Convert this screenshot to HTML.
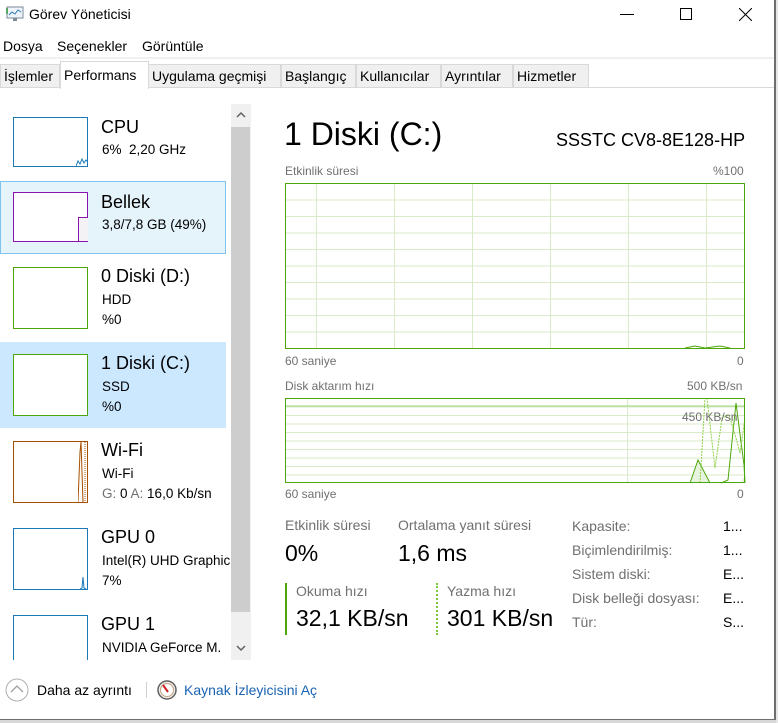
<!DOCTYPE html>
<html><head><meta charset="utf-8"><style>
*{margin:0;padding:0;box-sizing:border-box}
body{width:778px;height:723px;background:#fff;font-family:"Liberation Sans",sans-serif;position:relative;overflow:hidden;color:#000}
.a{position:absolute;white-space:nowrap}
.g{color:#707070}
.tab{position:absolute;top:64px;height:24px;border:1px solid #d9d9d9;background:#f0f0f0;font-size:14px;padding:3px 3px 0 3px;overflow:hidden}
.box{position:absolute;left:13px;width:75px;height:50px;background:#fff}
.t1{font-size:18px}
.t2{font-size:13.5px}
</style></head><body>
<!-- title -->
<svg class="a" style="left:6px;top:6px" width="18" height="16"><rect x="1" y="1" width="16" height="11" fill="#eef4fa" stroke="#7c8a99"/><polyline points="3,9 6,6 9,8 12,4 15,6" fill="none" stroke="#2a7ab8"/><rect x="7" y="12" width="4" height="3" fill="#7c8a99"/><rect x="0" y="2" width="2" height="6" fill="#5a6"/></svg>
<div class="a" style="left:29px;top:6px;font-size:14px">Görev Yöneticisi</div>
<div class="a" style="left:620px;top:14px;width:14px;height:1px;background:#000"></div>
<div class="a" style="left:680px;top:8px;width:12px;height:12px;border:1px solid #000"></div>
<svg class="a" style="left:739px;top:8px" width="13" height="13"><path d="M0 0L13 13M13 0L0 13" stroke="#000" stroke-width="1"/></svg>
<!-- menu -->
<div class="a" style="left:3px;top:38px;font-size:14px">Dosya</div>
<div class="a" style="left:57px;top:38px;font-size:14px">Seçenekler</div>
<div class="a" style="left:142px;top:38px;font-size:14px">Görüntüle</div>
<div class="a" style="left:0;top:57px;width:775px;height:2px;background:#f0f0f0"></div>
<!-- tabs -->
<div class="a" style="left:0;top:87px;width:775px;height:1px;background:#d9d9d9"></div>
<div class="tab" style="left:0;width:60px">İşlemler</div>
<div class="tab" style="left:60px;top:61px;height:28px;width:89px;background:#fff;border-bottom:none;font-size:14px;padding-top:5px">Performans</div>
<div class="tab" style="left:148px;width:133px">Uygulama geçmişi</div>
<div class="tab" style="left:281px;width:75px">Başlangıç</div>
<div class="tab" style="left:356px;width:85px">Kullanıcılar</div>
<div class="tab" style="left:441px;width:72px">Ayrıntılar</div>
<div class="tab" style="left:513px;width:76px">Hizmetler</div>
<!-- left list -->
<div class="a" style="left:0;top:181px;width:226px;height:73px;background:#e5f3fb;border:1px solid #7ec4ee"></div>
<div class="a" style="left:0;top:342px;width:226px;height:86px;background:#cce8ff"></div>

<div class="box" style="top:117px;border:1px solid #1979b8"><svg class="a" style="left:62px;top:36px" width="12" height="12"><polyline points="0,12 2,7 4,10 6,5 8,9 10,6 12,8" fill="none" stroke="#1979b8"/></svg></div>
<div class="a t1" style="left:101px;top:117px">CPU</div>
<div class="a t2" style="left:102px;top:142px">6%&nbsp; 2,20 GHz</div>

<div class="box" style="top:192px;border:1px solid #8b12ae"><div class="a" style="left:64px;top:24px;width:10px;height:24px;background:#f4f2f4;border-left:1px solid #8b12ae;border-top:1px solid #8b12ae"></div></div>
<div class="a t1" style="left:101px;top:192px">Bellek</div>
<div class="a t2" style="left:102px;top:217px">3,8/7,8 GB (49%)</div>

<div class="box" style="top:267px;height:62px;border:1px solid #4da60c"></div>
<div class="a t1" style="left:101px;top:266px">0 Diski (D:)</div>
<div class="a t2" style="left:102px;top:292px">HDD</div>
<div class="a t2" style="left:102px;top:312px">%0</div>

<div class="box" style="top:354px;height:62px;border:1px solid #4da60c"></div>
<div class="a t1" style="left:101px;top:353px">1 Diski (C:)</div>
<div class="a t2" style="left:102px;top:379px">SSD</div>
<div class="a t2" style="left:102px;top:399px">%0</div>

<div class="box" style="top:441px;height:62px;border:1px solid #a74f01"><svg class="a" style="left:64px;top:0" width="10" height="60"><polyline points="0,60 2,10 3,0 4,30 5,60" fill="none" stroke="#a74f01"/><line x1="7" y1="0" x2="7" y2="60" stroke="#a74f01" stroke-dasharray="1,1"/></svg></div>
<div class="a t1" style="left:101px;top:440px">Wi-Fi</div>
<div class="a t2" style="left:102px;top:466px">Wi-Fi</div>
<div class="a t2" style="left:102px;top:486px"><span class="g">G:</span> 0 <span class="g">A:</span> 16,0 Kb/sn</div>

<div class="box" style="top:528px;height:62px;border:1px solid #1979b8"><svg class="a" style="left:66px;top:44px" width="8" height="16"><polyline points="0,16 2,15 3,4 4,15 6,16" fill="none" stroke="#1979b8"/></svg></div>
<div class="a t1" style="left:101px;top:527px">GPU 0</div>
<div class="a t2" style="left:102px;top:553px;width:128px;overflow:hidden">Intel(R) UHD Graphics</div>
<div class="a t2" style="left:102px;top:573px">7%</div>

<div class="box" style="top:615px;height:62px;border:1px solid #1979b8"></div>
<div class="a t1" style="left:101px;top:614px">GPU 1</div>
<div class="a t2" style="left:102px;top:640px">NVIDIA GeForce M.</div>
<div class="a" style="left:0;top:660px;width:260px;height:60px;background:#fff"></div>
<!-- scrollbar -->
<div class="a" style="left:231px;top:104px;width:20px;height:556px;background:#f0f0f0"></div>
<div class="a" style="left:231px;top:127px;width:19px;height:485px;background:#cdcdcd"></div>
<svg class="a" style="left:235px;top:110px" width="12" height="10"><polyline points="2,7 6,3 10,7" fill="none" stroke="#606060" stroke-width="1.5"/></svg>
<svg class="a" style="left:235px;top:643px" width="12" height="10"><polyline points="2,3 6,7 10,3" fill="none" stroke="#606060" stroke-width="1.5"/></svg>
<!-- right -->
<div class="a" style="left:284px;top:116px;font-size:32px">1 Diski (C:)</div>
<div class="a" style="left:556px;top:130px;font-size:18px">SSSTC CV8-8E128-HP</div>
<div class="a g" style="left:285px;top:164px;font-size:12px">Etkinlik süresi</div>
<div class="a g" style="left:713px;top:164px;font-size:12px">%100</div>
<svg class="a" style="left:285px;top:183px" width="461" height="167">
<g stroke="#d9ebc9" stroke-width="1">
<path d="M0 17H460M0 33.5H460M0 50H460M0 66.5H460M0 83H460M0 99.5H460M0 116H460M0 132.5H460M0 149H460"/>
<path d="M31.5 0V166M109.5 0V166M187.5 0V166M265.5 0V166M343.5 0V166M421.5 0V166"/>
</g>
<polyline points="400,165 410,163 420,165 435,163 445,165" fill="none" stroke="#4da60c"/>
<rect x="0.5" y="0.5" width="459" height="165" fill="none" stroke="#4da60c"/>
</svg>
<div class="a g" style="left:285px;top:354px;font-size:12px">60 saniye</div>
<div class="a g" style="left:737px;top:354px;font-size:12px">0</div>
<div class="a g" style="left:285px;top:379px;font-size:12px">Disk aktarım hızı</div>
<div class="a g" style="left:687px;top:379px;font-size:12px">500 KB/sn</div>
<svg class="a" style="left:285px;top:398px" width="461" height="86">
<g stroke="#d9ebc9" stroke-width="1">
<path d="M0 9H460M0 17.5H460M0 26H460M0 34.5H460M0 43H460M0 51.5H460M0 60H460M0 68.5H460M0 77H460"/>
<path d="M342.5 0V85"/>
</g>
<path d="M0 8H460" stroke="#9fd37a"/>
<polygon points="405,85 413,62 425,85 455,85 461,76 460,85" fill="#e8f3df"/>
<polyline points="405,85 413,62 425,85" fill="none" stroke="#4da60c"/>
<polyline points="436,85 443,82 451,5 459,67 460,85" fill="none" stroke="#4da60c"/>
<polyline points="415,85 420,0 422,0 430,70 437,20 444,17 451,40 455,55 460,20" fill="none" stroke="#8fd14a" stroke-dasharray="2,1"/>
<rect x="0.5" y="0.5" width="459" height="84" fill="none" stroke="#4da60c"/>
</svg>
<div class="a g" style="left:682px;top:410px;font-size:12px">450 KB/sn</div>
<div class="a g" style="left:285px;top:487px;font-size:12px">60 saniye</div>
<div class="a g" style="left:737px;top:487px;font-size:12px">0</div>

<div class="a g" style="left:285px;top:517px;font-size:14px">Etkinlik süresi</div>
<div class="a" style="left:285px;top:540px;font-size:23px">0%</div>
<div class="a g" style="left:398px;top:517px;font-size:14px">Ortalama yanıt süresi</div>
<div class="a" style="left:398px;top:540px;font-size:23px">1,6 ms</div>
<div class="a" style="left:285px;top:583px;width:2px;height:52px;background:#4da60c"></div>
<div class="a g" style="left:296px;top:583px;font-size:14px">Okuma hızı</div>
<div class="a" style="left:296px;top:605px;font-size:23px">32,1 KB/sn</div>
<div class="a" style="left:436px;top:583px;width:0;height:52px;border-left:2px dotted #7cc93d"></div>
<div class="a g" style="left:447px;top:583px;font-size:14px">Yazma hızı</div>
<div class="a" style="left:447px;top:605px;font-size:23px">301 KB/sn</div>
<div class="a g" style="left:572px;top:514px;font-size:14px;line-height:24px">Kapasite:<br>Biçimlendirilmiş:<br>Sistem diski:<br>Disk belleği dosyası:<br>Tür:</div>
<div class="a" style="left:723px;top:514px;font-size:14px;line-height:24px">1...<br>1...<br>E...<br>E...<br>S...</div>
<!-- footer -->
<svg class="a" style="left:5px;top:678px" width="24" height="24"><circle cx="12" cy="12" r="11" fill="#fff" stroke="#b0b0b0"/><polyline points="6,14 12,8 18,14" fill="none" stroke="#a0a0a0" stroke-width="1.3"/></svg>
<div class="a" style="left:37px;top:682px;font-size:14px">Daha az ayrıntı</div>
<div class="a" style="left:146px;top:682px;width:1px;height:16px;background:#d0d0d0"></div>
<svg class="a" style="left:157px;top:680px" width="20" height="20"><circle cx="10" cy="10" r="9" fill="#eee" stroke="#606060" stroke-width="1.5"/><circle cx="10" cy="10" r="6.5" fill="#fff" stroke="#c8a080"/><path d="M6 5L11 12" stroke="#d02020" stroke-width="2"/></svg>
<div class="a" style="left:184px;top:682px;font-size:14px;color:#1a63b3">Kaynak İzleyicisini Aç</div>
<!-- borders -->
<div class="a" style="left:774px;top:0;width:2px;height:721px;background:#6e6e6e"></div>
<div class="a" style="left:776px;top:0;width:2px;height:723px;background:#e6e6e6"></div>
<div class="a" style="left:0;top:719px;width:776px;height:1px;background:#6e6e6e"></div>
<div class="a" style="left:0;top:720px;width:776px;height:3px;background:#d8d8d8"></div>
</body></html>
